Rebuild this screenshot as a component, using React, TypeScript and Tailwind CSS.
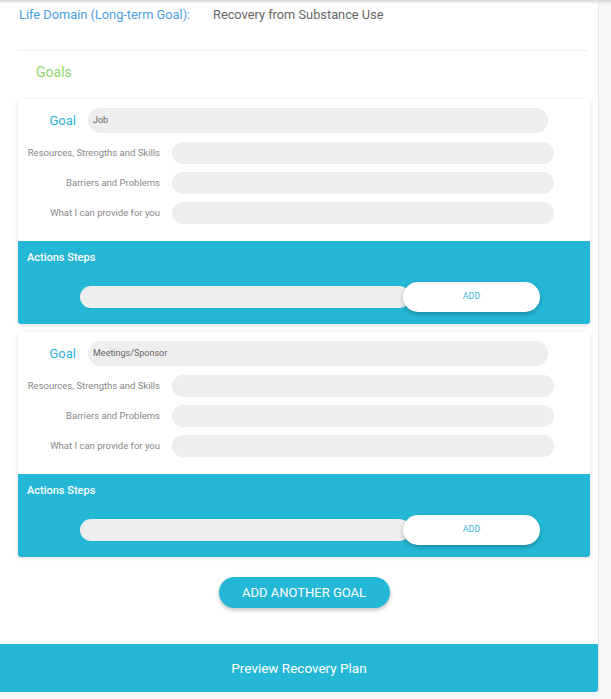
import React from "react";

interface GoalCardProps {
  goal: string;
}

const rows = ["Resources, Strengths and Skills", "Barriers and Problems", "What I can provide for you"];

function GoalCard({ goal }: GoalCardProps) {
  return (
    <div className="overflow-hidden rounded-[3px] bg-white shadow-[0_1px_4px_rgba(0,0,0,0.14)]">
      <div className="pt-[9px] pb-[17px]">
        <div className="flex items-center">
          <span className="w-[58px] text-right text-[13px] leading-[25px] text-[#2db4d6]">Goal</span>
          <div className="ml-[12px] flex h-[25px] w-[460px] items-center rounded-full bg-[#eeeeee] px-[5px] text-[9px] text-[#666]">
            {goal}
          </div>
        </div>
        {rows.map((r, i) => (
          <div key={r} className={`flex items-center ${i === 0 ? "mt-[9px]" : "mt-[8px]"}`}>
            <span className="w-[142px] text-right text-[9.5px] leading-[22px] text-[#888]">{r}</span>
            <div className="ml-[12px] h-[22px] w-[382px] rounded-full bg-[#eeeeee]" />
          </div>
        ))}
      </div>
      <div className="bg-[#24b7d6] px-[9px] pt-[9px] pb-[12px]">
        <div className="text-[11px] leading-[16px] font-medium text-white">Actions Steps</div>
        <div className="mt-[16px] flex items-center">
          <div className="ml-[53px] h-[22px] w-[330px] rounded-full bg-[#eeeeee]" />
          <button className="-ml-[7px] flex h-[30px] w-[137px] items-center justify-center rounded-full bg-white text-[9px] text-[#3bb8dc] shadow-[0_2px_4px_rgba(0,0,0,0.25)]">
            ADD
          </button>
        </div>
      </div>
    </div>
  );
}

export default function App() {
  return (
    <div className="relative min-h-[699px] bg-[#f5f7f7] font-['Roboto',sans-serif]">
      <div className="flex">
        <div className="w-[598px] bg-white">
          <div className="h-[4px] bg-gradient-to-b from-[#d8d8d8] to-white" />
          <div className="flex pt-[1px] pl-[19px] text-[12.8px] leading-[20px]">
            <span className="w-[194px] text-[#4a9fe3]">Life Domain (Long-term Goal):</span>
            <span className="text-[#666]">Recovery from Substance Use</span>
          </div>
          <div className="mt-[25px] mr-[10px] ml-[18px] border-t border-[#eeeeee]" />
          <div className="pt-[12px] pl-[36px] text-[14px] leading-[18px] text-[#8fd96c]">Goals</div>
          <div className="mt-[18px] mr-[8px] ml-[18px] flex flex-col gap-[8px]">
            <GoalCard goal="Job" />
            <GoalCard goal="Meetings/Sponsor" />
          </div>
          <div className="mt-[20px] mr-[8px] ml-[18px] flex justify-center">
            <button className="h-[31px] w-[171px] rounded-full bg-[#24b7d6] text-[13px] text-white shadow-[0_2px_4px_rgba(0,0,0,0.25)]">
              ADD ANOTHER GOAL
            </button>
          </div>
          <div className="mt-[36px] flex h-[48px] items-center justify-center rounded-br-[3px] bg-[#24b7d6] text-[13.5px] text-white">
            Preview Recovery Plan
          </div>
        </div>
        <div className="flex-1 border-l border-[#e6e8e8] bg-[#f5f7f7]">
          <div className="h-[4px] bg-gradient-to-b from-[#d0d0d0] to-[#f5f7f7]" />
        </div>
      </div>
    </div>
  );
}
